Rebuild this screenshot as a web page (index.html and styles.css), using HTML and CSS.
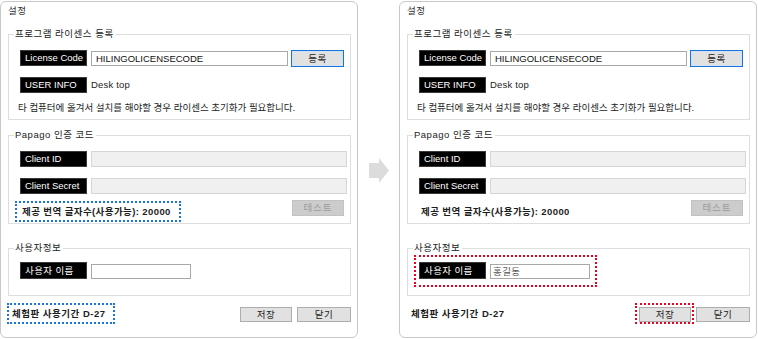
FILE: index.html
```html
<!DOCTYPE html>
<html lang="ko">
<head>
<meta charset="utf-8">
<title>설정</title>
<link rel="stylesheet" href="styles.css">
</head>
<body>
<div class="stage">
  <section class="panel">
    <div class="title">설정</div>
    <fieldset class="group group-license">
      <legend>프로그램 라이센스 등록</legend>
      <div class="group-body">
        <div class="row row-license">
          <span class="tag">License Code</span>
          <span class="input input-license">HILINGOLICENSECODE</span>
          <button class="btn btn-default">등록</button>
        </div>
        <div class="row row-info">
          <span class="tag">USER INFO</span>
          <span class="value">Desk top</span>
        </div>
        <p class="note">타 컴퓨터에 옮겨서 설치를 해야할 경우 라이센스 초기화가 필요합니다.</p>
      </div>
    </fieldset>
    <fieldset class="group group-papago">
      <legend>Papago 인증 코드</legend>
      <div class="group-body">
        <div class="row row-client">
          <span class="tag">Client ID</span>
          <span class="input input-disabled"></span>
        </div>
        <div class="row row-client">
          <span class="tag">Client Secret</span>
          <span class="input input-disabled"></span>
        </div>
        <div class="row row-quota">
          <span class="mark mark-blue quota">제공 번역 글자수(사용가능): 20000</span>
          <button class="btn btn-disabled">테스트</button>
        </div>
      </div>
    </fieldset>
    <fieldset class="group group-user">
      <legend>사용자정보</legend>
      <div class="group-body">
        <div class="mark mark-none user-row">
          <span class="tag tag-tall">사용자 이름</span>
          <span class="input input-name"></span>
        </div>
      </div>
    </fieldset>
    <div class="footer">
      <span class="mark mark-blue trial">체험판 사용기간 D-27</span>
      <div class="actions">
        <span class="mark mark-none save-wrap"><button class="btn">저장</button></span>
        <button class="btn btn-close">닫기</button>
      </div>
    </div>
  </section>

  <div class="arrow-col">
    <svg class="arrow" width="20" height="25" viewBox="0 0 20 25" aria-hidden="true">
      <path d="M0 5 H10 V0 L20 12.5 L10 25 V20 H0 Z" fill="#dcdcdc"/>
    </svg>
  </div>

  <section class="panel">
    <div class="title">설정</div>
    <fieldset class="group group-license">
      <legend>프로그램 라이센스 등록</legend>
      <div class="group-body">
        <div class="row row-license">
          <span class="tag">License Code</span>
          <span class="input input-license">HILINGOLICENSECODE</span>
          <button class="btn btn-default">등록</button>
        </div>
        <div class="row row-info">
          <span class="tag">USER INFO</span>
          <span class="value">Desk top</span>
        </div>
        <p class="note">타 컴퓨터에 옮겨서 설치를 해야할 경우 라이센스 초기화가 필요합니다.</p>
      </div>
    </fieldset>
    <fieldset class="group group-papago">
      <legend>Papago 인증 코드</legend>
      <div class="group-body">
        <div class="row row-client">
          <span class="tag">Client ID</span>
          <span class="input input-disabled"></span>
        </div>
        <div class="row row-client">
          <span class="tag">Client Secret</span>
          <span class="input input-disabled"></span>
        </div>
        <div class="row row-quota">
          <span class="mark mark-none quota">제공 번역 글자수(사용가능): 20000</span>
          <button class="btn btn-disabled">테스트</button>
        </div>
      </div>
    </fieldset>
    <fieldset class="group group-user">
      <legend>사용자정보</legend>
      <div class="group-body">
        <div class="mark mark-red user-row">
          <span class="tag tag-tall">사용자 이름</span>
          <span class="input input-name input-filled">홍길동</span>
        </div>
      </div>
    </fieldset>
    <div class="footer">
      <span class="mark mark-none trial">체험판 사용기간 D-27</span>
      <div class="actions">
        <span class="mark mark-red save-wrap"><button class="btn">저장</button></span>
        <button class="btn btn-close">닫기</button>
      </div>
    </div>
  </section>
</div>
</body>
</html>
```

FILE: styles.css
```css
* {
  box-sizing: border-box;
}

html,
body {
  margin: 0;
  padding: 0;
  background: #ffffff;
}

body {
  font-family: "Liberation Sans", "Noto Sans CJK KR", sans-serif;
  font-size: 9.5px;
  line-height: 12px;
  color: #1c1c1c;
}

.stage {
  display: flex;
  width: 758px;
  height: 339px;
  padding-top: 1px;
}

.panel {
  width: 358px;
  height: 337px;
  flex: none;
  border: 1px solid #c8c8c8;
  border-radius: 6px;
  padding: 3px 6px 0 7px;
  display: flex;
  flex-direction: column;
}

.title {
  height: 12px;
  margin-bottom: 11px;
  color: #333333;
  letter-spacing: 0.4px;
}

.arrow-col {
  width: 41px;
  flex: none;
  display: flex;
  align-items: center;
  padding-left: 11px;
}

.arrow {
  display: block;
}

/* group boxes */
.group {
  margin: 0;
  padding: 0;
  min-width: 0;
  width: 343px;
  border: 1px solid #dedede;
}

.group legend {
  margin-left: 5px;
  padding: 0 2px 0 1px;
  height: 12px;
  line-height: 12px;
  color: #222222;
  letter-spacing: 0.5px;
}

.group-body {
  display: flex;
  flex-direction: column;
  padding: 10px 6px 5px 11px;
}

.group-papago {
  margin-top: 9px;
}

.group-papago .group-body {
  padding-bottom: 1px;
}

.group-user {
  margin-top: 18px;
}

.group-user .group-body {
  padding: 1px 6px 8px 6px;
}

.row {
  display: flex;
  align-items: flex-start;
}

.row-license {
  height: 17px;
}

.row-info {
  margin-top: 10px;
  align-items: center;
}

.row-client + .row-client {
  margin-top: 11px;
}

.row-quota {
  margin-top: 6px;
  justify-content: space-between;
}

/* black labels */
.tag {
  flex: none;
  width: 67px;
  height: 16px;
  padding-left: 4px;
  background: #000000;
  border: 1px solid #3a3a3a;
  color: #ffffff;
  line-height: 14px;
  white-space: nowrap;
  margin-right: 4px;
}

.tag-tall {
  height: 17px;
  line-height: 15px;
  letter-spacing: 0.4px;
}

.value {
  line-height: 16px;
  letter-spacing: 0.2px;
}

/* inputs */
.input {
  flex: none;
  display: block;
  height: 16px;
  border: 1px solid #a8a8a8;
  background: #ffffff;
  padding-left: 4px;
  line-height: 14px;
  color: #111111;
}

.input-license {
  width: 197px;
  margin-top: 1px;
  height: 15px;
  line-height: 13px;
  margin-right: 3px;
}

.input-disabled {
  width: 256px;
  background: #f0f0f0;
  border-color: #d6d6d6;
}

.input-name {
  width: 100px;
  height: 15px;
  margin-top: 2px;
  line-height: 13px;
}

.input-filled {
  color: #555555;
  padding-left: 2px;
  letter-spacing: 0.4px;
}

.note {
  margin: 9px 0 0 -2px;
  height: 12px;
  white-space: nowrap;
}

/* buttons */
.btn {
  display: block;
  flex: none;
  margin: 0;
  padding: 0;
  width: 52px;
  height: 15px;
  font: inherit;
  line-height: 13px;
  text-align: center;
  color: #222222;
  background: #e1e1e1;
  border: 1px solid #adadad;
  border-radius: 0;
  letter-spacing: 0.4px;
}

.btn-default {
  width: 53px;
  height: 17px;
  line-height: 14px;
  border: 1px solid #1a73d9;
  box-shadow: inset 0 0 0 1px #cfe3f8;
  background: #e1e1e1;
}

.btn-disabled {
  width: 52px;
  height: 16px;
  line-height: 14px;
  background: #cccccc;
  border-color: #c2c2c2;
  color: #9a9a9a;
  letter-spacing: 1px;
}

.btn-close {
  width: 54px;
  margin-top: 4px;
}

/* highlight marks */
.mark {
  border: 2px dotted transparent;
}

.mark-blue {
  border-color: #1b74e4;
}

.mark-red {
  border-color: #e8001c;
}

.quota {
  margin-left: -5px;
  margin-top: 1px;
  height: 21px;
  padding: 0 8px 0 5px;
  line-height: 17px;
  font-weight: 700;
  white-space: nowrap;
  letter-spacing: 0.4px;
}

.user-row {
  display: flex;
  align-items: flex-start;
  width: 183px;
  padding: 5px 5px 6px 3px;
}

.footer {
  margin-top: 7px;
  width: 343px;
  display: flex;
  justify-content: space-between;
  align-items: flex-start;
}

.trial {
  margin-left: -1px;
  height: 21px;
  padding: 0 7px 0 3px;
  line-height: 17px;
  font-weight: 700;
  white-space: nowrap;
  letter-spacing: 0.5px;
}

.actions {
  display: flex;
  align-items: flex-start;
}

.save-wrap {
  display: block;
  padding: 2px 1px 0 2px;
  height: 21px;
  margin-right: 2px;
}
```
